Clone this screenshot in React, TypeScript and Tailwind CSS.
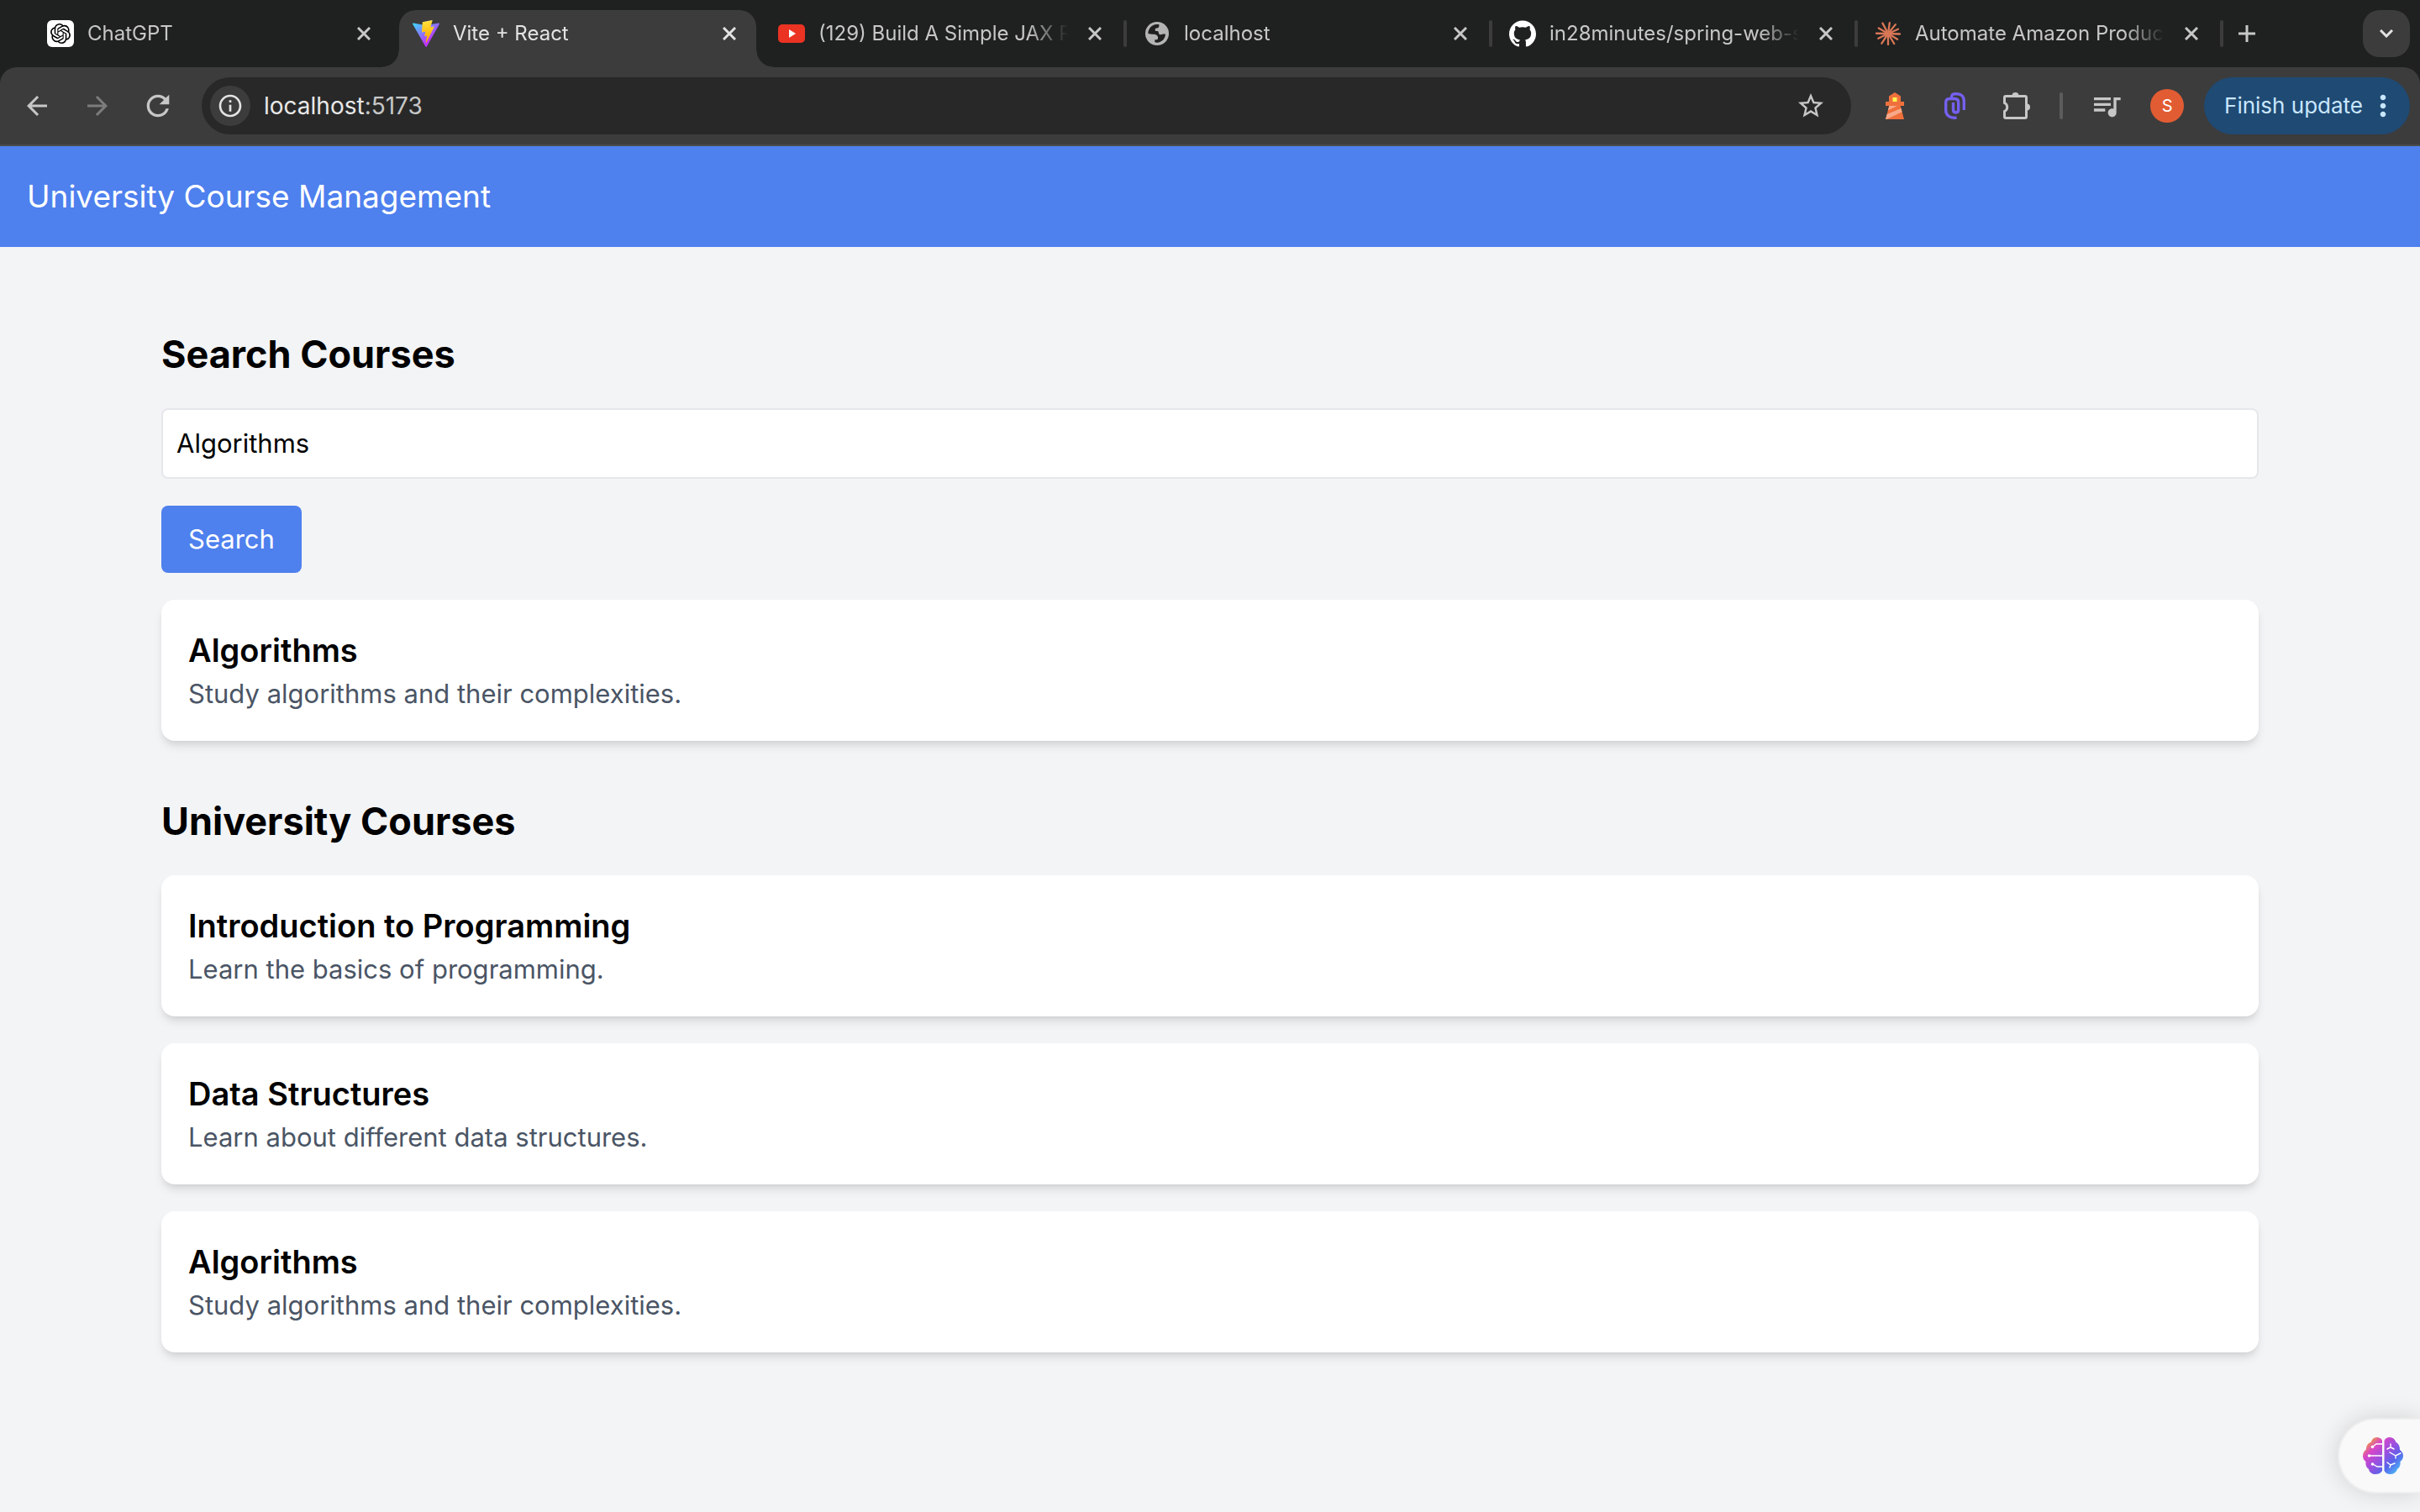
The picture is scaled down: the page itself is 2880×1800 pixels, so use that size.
import { useId, type ReactNode } from "react";
import { SiOpenai, SiGithub } from "react-icons/si";
import { MdStarBorder, MdQueueMusic, MdRefresh, MdArrowBack, MdArrowForward, MdOutlineInfo, MdMoreVert } from "react-icons/md";

type Course = { title: string; description: string };

const programming: Course = { title: "Introduction to Programming", description: "Learn the basics of programming." };
const dataStructures: Course = { title: "Data Structures", description: "Learn about different data structures." };
const algorithms: Course = { title: "Algorithms", description: "Study algorithms and their complexities." };

function ChatGptIcon() {
  return (
    <span className="flex size-8 items-center justify-center rounded-md bg-white text-black">
      <SiOpenai className="size-6" />
    </span>
  );
}

function ViteIcon() {
  const id = useId();
  return (
    <svg viewBox="0 0 256 257" className="size-8" aria-hidden="true">
      <defs>
        <linearGradient id={id + "a"} x1="-.8%" x2="57.6%" y1="7.7%" y2="78.4%">
          <stop offset="0%" stopColor="#41D1FF" />
          <stop offset="100%" stopColor="#BD34FE" />
        </linearGradient>
        <linearGradient id={id + "b"} x1="43.4%" x2="50.3%" y1="2.2%" y2="89%">
          <stop offset="0%" stopColor="#FFEA83" />
          <stop offset="8.3%" stopColor="#FFDD35" />
          <stop offset="100%" stopColor="#FFA800" />
        </linearGradient>
      </defs>
      <path fill={`url(#${id}a)`} d="M255.153 37.938 134.897 252.976c-2.483 4.44-8.862 4.466-11.382.048L.875 37.958c-2.746-4.814 1.371-10.646 6.827-9.67l120.385 21.517a6.537 6.537 0 0 0 2.322-.004l117.867-21.483c5.438-.991 9.574 4.796 6.877 9.62Z" />
      <path fill={`url(#${id}b)`} d="M185.432.063 96.44 17.501a3.268 3.268 0 0 0-2.634 3.014l-5.474 92.456a3.268 3.268 0 0 0 3.997 3.378l24.777-5.718c2.318-.535 4.413 1.507 3.936 3.838l-7.361 36.047c-.495 2.426 1.782 4.5 4.151 3.78l15.304-4.649c2.372-.72 4.652 1.36 4.15 3.788l-11.698 56.621c-.732 3.542 3.979 5.473 5.943 2.437l1.313-2.028 72.516-144.72c1.215-2.423-.88-5.186-3.54-4.672l-25.505 4.922c-2.396.462-4.435-1.77-3.759-4.114l16.646-57.705c.677-2.35-1.37-4.583-3.769-4.113Z" />
    </svg>
  );
}

function YouTubeIcon() {
  return (
    <svg viewBox="0 0 32 32" className="size-8" aria-hidden="true">
      <rect y="5" width="32" height="22" rx="5" fill="#ea3323" />
      <path d="M13 11v10l8-5z" fill="#fff" />
    </svg>
  );
}

function GlobeIcon() {
  return (
    <svg viewBox="36 42 96 96" className="size-8" aria-hidden="true">
      <circle cx="84" cy="90" r="42" fill="#b4b4b4" />
      <path
        d="M52 90C52 72 66 58 82 57H91V64C91 69 87 71 79 71C76 73 77 78 79 81H86C90 82 89 88 92 93C98 96 103 91 114 92C113 108 101 121 84 122L76 121V112H84C88 110 88 104 86 99C82 92 74 92 66 92Z"
        fill="#1f2120"
      />
    </svg>
  );
}

function ClaudeIcon() {
  const rays = [0, 31, 58, 84, 113, 141, 172, 205, 236, 263, 292, 324];
  return (
    <svg viewBox="0 0 32 32" className="size-8" aria-hidden="true">
      <g stroke="#d97757" strokeWidth="2.3" strokeLinecap="round">
        {rays.map((a, i) => (
          <line key={a} x1="16" y1="16" x2="16" y2={i % 2 ? 2 : 3} transform={`rotate(${a + 8} 16 16)`} />
        ))}
      </g>
    </svg>
  );
}

function CloseIcon() {
  return (
    <svg viewBox="0 0 16 16" className="size-4" fill="none" stroke="currentColor" strokeWidth="3" aria-hidden="true">
      <path d="M1 1l14 14M15 1L1 15" />
    </svg>
  );
}

function LighthouseIcon() {
  return (
    <svg viewBox="0 0 32 32" className="size-8" aria-hidden="true">
      <path d="M16 0l7 4.500V11h4v5h-4.300L27 32H5l4.300-16H5v-5h4V4.500z" fill="#f0703c" />
      <path d="M9.300 16H19L7.800 21.500zM6.600 26L23.500 19l1 4.200L6 32H5z" fill="#f7a98a" />
      <rect x="13.500" y="6" width="5" height="5" fill="#fdf84f" />
    </svg>
  );
}

function ClipIcon() {
  return (
    <svg viewBox="-3 0 32 32" className="size-8" fill="none" stroke="#7460f0" strokeWidth="3.400" aria-hidden="true">
      <path d="M8.500 6c0-3 1.500-4.300 4-4.300H15c5 0 8.300 3.500 8.300 8.300v11" />
      <path d="M14.500 30.300H11c-5 0-9.300-3.500-9.300-9V12c0-3 1.800-4.500 4.500-4.500h6c3 0 4.500 1.500 4.500 4.500v8.500c0 2.500-1.200 3.500-3 3.500s-3.200-1-3.200-3.500V12" />
    </svg>
  );
}

function PuzzleIcon() {
  return (
    <svg viewBox="0 0 36 36" className="size-9" aria-hidden="true">
      <path
        d="M4 6.500h23a1.500 1.500 0 0 1 1.500 1.500v23a1.500 1.500 0 0 1-1.500 1.500H4A1.500 1.500 0 0 1 2.500 31v-6.500a5.500 5.500 0 0 0 0-10V8A1.500 1.500 0 0 1 4 6.500z"
        fill="none"
        stroke="currentColor"
        strokeWidth="3"
      />
      <path d="M11.500 6a4 4 0 0 1 8 0zM29 15.500a4 4 0 0 1 0 8z" fill="currentColor" />
    </svg>
  );
}

function BrainIcon() {
  const id = useId();
  return (
    <svg viewBox="0 0 48 44" className="h-11 w-12" aria-hidden="true">
      <defs>
        <linearGradient id={id} x1="6" y1="4" x2="42" y2="40" gradientUnits="userSpaceOnUse">
          <stop offset="0" stopColor="#f0a03c" />
          <stop offset=".22" stopColor="#d946c6" />
          <stop offset=".5" stopColor="#9a4fe0" />
          <stop offset=".75" stopColor="#5864ea" />
          <stop offset="1" stopColor="#4cb4f8" />
        </linearGradient>
      </defs>
      <g fill={`url(#${id})`}>
        <path d="M23 4v36c-2 3-5 4-8 4-4 0-7-2-8-6-3-2-4-5-3.500-9C1 27 0 25 0 22s1.500-6 4-7.500C4 10 6 7 9.500 6 11 2 13 0 16.500 0 19 0 22 1 23 4z" />
        <path d="M25.500 4v36c2 3 4 4 7 4 4 0 7-2 8.500-6 3-2 4-5 3.500-9 2.500-2 3.500-4 3.500-7s-1.500-5-4-7c0-4-1-7-4.500-9C38 2 35.500 0 32 0c-3 0-5 1-6.500 4z" />
      </g>
      <g fill="none" stroke="#fff" strokeWidth="1.400" strokeLinecap="round">
        <path d="M23 8h-7l-4 3M23 22H8M23 35h-6l-5-3M33 8v4l-4 2M33 12l4 2M32 18l7 4 6-3M39 22v3M29 30l4 3 5-2M33 33l-1 3" />
      </g>
      <g fill="#fff">
        <circle cx="11.500" cy="11.500" r="1.800" />
        <circle cx="7.500" cy="22" r="1.800" />
        <circle cx="11.500" cy="32" r="1.800" />
      </g>
    </svg>
  );
}

type TabInfo = { title: string; icon: ReactNode; active?: boolean; divider?: boolean };

const tabs: TabInfo[] = [
  { title: "ChatGPT", icon: <ChatGptIcon /> },
  { title: "Vite + React", icon: <ViteIcon />, active: true },
  { title: "(129) Build A Simple JAX R", icon: <YouTubeIcon />, divider: true },
  { title: "localhost", icon: <GlobeIcon />, divider: true },
  { title: "in28minutes/spring-web-s", icon: <SiGithub className="size-8 text-white" />, divider: true },
  { title: "Automate Amazon Produc", icon: <ClaudeIcon />, divider: true },
];

function Tab({ title, icon, active, divider }: TabInfo) {
  return (
    <div className="relative flex h-20 min-w-0 max-w-[435px] flex-1 items-stretch pt-3 text-[#c7c7c7]">
      {active && (
        <>
          <span className="absolute bottom-0 -left-5 size-5 bg-[radial-gradient(circle_at_0_0,#1f2120_19px,#3c3c3c_20px)]" />
          <span className="absolute -right-[10px] bottom-0 size-5 bg-[radial-gradient(circle_at_100%_0,#1f2120_19px,#3c3c3c_20px)]" />
        </>
      )}
      <div className={active ? "flex min-w-0 flex-1 items-center rounded-t-[20px] bg-[#3c3c3c] pr-4 pb-3 pl-4 text-[#e3e3e3]" : "flex min-w-0 flex-1 items-center pr-4 pb-3 pl-4"}>
        <span className="shrink-0">{icon}</span>
        <span className="ml-4 min-w-0 flex-1 overflow-hidden text-2xl leading-8 whitespace-nowrap [mask-image:linear-gradient(to_right,#000_calc(100%-48px),transparent)]">
          {title}
        </span>
        <button type="button" aria-label={`Close ${title}`} className="ml-4 flex size-8 shrink-0 items-center justify-center">
          <CloseIcon />
        </button>
      </div>
      <span className={divider ? "mt-3 mr-1 ml-0.5 h-8 w-1 shrink-0 rounded-full bg-[#3c3c3c]" : "mr-1 ml-0.5 w-1 shrink-0"} />
    </div>
  );
}

function BrowserChrome() {
  return (
    <div className="bg-[#1f2120]">
      <div className="flex h-20 pr-3 pl-10">
        <div className="flex min-w-0 flex-1">
          {tabs.map((tab) => (
            <Tab key={tab.title} {...tab} />
          ))}
          <button type="button" aria-label="New tab" className="ml-1 flex h-20 w-10 shrink-0 items-center justify-center text-[#c7c7c7]">
            <svg viewBox="0 0 20 20" className="size-5" stroke="currentColor" strokeWidth="3" aria-hidden="true">
              <path d="M10 0v20M0 10h20" />
            </svg>
          </button>
        </div>
        <button type="button" aria-label="Search tabs" className="mt-3 flex size-14 items-center justify-center rounded-[20px] bg-[#3c3c3c] text-[#e3e3e3]">
          <svg viewBox="0 0 16 10" className="h-[10px] w-4" fill="none" stroke="currentColor" strokeWidth="3" aria-hidden="true">
            <path d="M1 1l7 7 7-7" />
          </svg>
        </button>
      </div>
      <div className="flex h-[94px] items-center rounded-t-[20px] border-b-2 border-[#4a4b4a] bg-[#3c3c3c] pr-3 pl-6 text-[#c7c7c7]">
        <button type="button" aria-label="Back" className="flex size-10 items-center justify-center">
          <MdArrowBack className="size-9" />
        </button>
        <button type="button" aria-label="Forward" className="ml-8 flex size-10 items-center justify-center text-[#7c7c7c]">
          <MdArrowForward className="size-9" />
        </button>
        <button type="button" aria-label="Reload" className="ml-8 flex size-10 items-center justify-center">
          <MdRefresh className="size-10" />
        </button>
        <div className="ml-8 flex h-[68px] min-w-0 flex-1 items-center rounded-full bg-[#282828] pr-7 pl-[10px]">
          <button type="button" aria-label="Site information" className="flex size-12 items-center justify-center rounded-full bg-[#3c3c3c] text-[#e3e3e3]">
            <MdOutlineInfo className="size-8" />
          </button>
          <p className="ml-4 flex-1 text-[28px] leading-9 text-[#e8e8e8]">
            localhost<span className="text-[#c7c7c7]">:5173</span>
          </p>
          <button type="button" aria-label="Bookmark this tab" className="flex size-10 items-center justify-center">
            <MdStarBorder className="size-9" />
          </button>
        </div>
        <div className="ml-9 flex items-center">
          <button type="button" aria-label="Lighthouse"><LighthouseIcon /></button>
          <button type="button" aria-label="Clip tool" className="ml-10"><ClipIcon /></button>
          <button type="button" aria-label="Extensions" className="ml-10"><PuzzleIcon /></button>
          <span className="ml-8 h-8 w-1 rounded-full bg-[#5c5c5c]" />
          <button type="button" aria-label="Media controls" className="ml-8"><MdQueueMusic className="size-10" /></button>
          <button type="button" aria-label="Profile" className="ml-8 flex size-10 items-center justify-center rounded-full bg-[#e25c33] text-xl text-white">
            S
          </button>
          <button type="button" className="ml-6 flex h-[68px] items-center rounded-full bg-[#1f4a73] pr-3 pl-6 text-[26px] leading-9 text-[#c9e6ff]">
            Finish update
            <MdMoreVert className="ml-1 size-10" />
          </button>
        </div>
      </div>
    </div>
  );
}

function CourseCard({ title, description }: Course) {
  return (
    <article className="rounded-2xl bg-white p-8 shadow-[0_8px_12px_-2px_rgba(0,0,0,0.1),0_4px_8px_-4px_rgba(0,0,0,0.1)]">
      <h3 className="text-[38px] leading-[56px] font-semibold">{title}</h3>
      <p className="text-[31px] leading-[48px] text-gray-600">{description}</p>
    </article>
  );
}

export default function App() {
  return (
    <div className="flex min-h-screen flex-col bg-[#f3f4f6] font-['Inter',sans-serif] text-black">
      <BrowserChrome />
      <header className="bg-[#4e80ee] p-8 text-white">
        <h1 className="text-[37px] leading-[56px]">University Course Management</h1>
      </header>
      <main className="flex flex-col gap-16 px-48 pt-24">
        <section>
          <h2 className="text-[45px] leading-[64px] font-bold">Search Courses</h2>
          <form className="mt-8" onSubmit={(e) => e.preventDefault()}>
            <input
              type="text"
              aria-label="Course name"
              defaultValue="Algorithms"
              className="block w-full rounded-lg border-2 border-gray-200 bg-white p-4 text-[31px] leading-[48px]"
            />
            <button type="submit" className="mt-8 block rounded-lg bg-[#4e80ee] px-8 py-4 text-[31px] leading-[48px] text-white">
              Search
            </button>
          </form>
          <div className="mt-8">
            <CourseCard {...algorithms} />
          </div>
        </section>
        <section>
          <h2 className="text-[45px] leading-[64px] font-bold">University Courses</h2>
          <div className="mt-8 flex flex-col gap-8">
            <CourseCard {...programming} />
            <CourseCard {...dataStructures} />
            <CourseCard {...algorithms} />
          </div>
        </section>
      </main>
      <button
        type="button"
        aria-label="Open assistant"
        className="fixed right-0 bottom-[22px] flex h-[90px] items-center rounded-l-full border-2 border-r-0 border-[#eeeeee] bg-[#f9f9f9] pr-5 pl-7 shadow-[0_0_28px_rgba(0,0,0,0.14)]"
      >
        <BrainIcon />
      </button>
    </div>
  );
}
